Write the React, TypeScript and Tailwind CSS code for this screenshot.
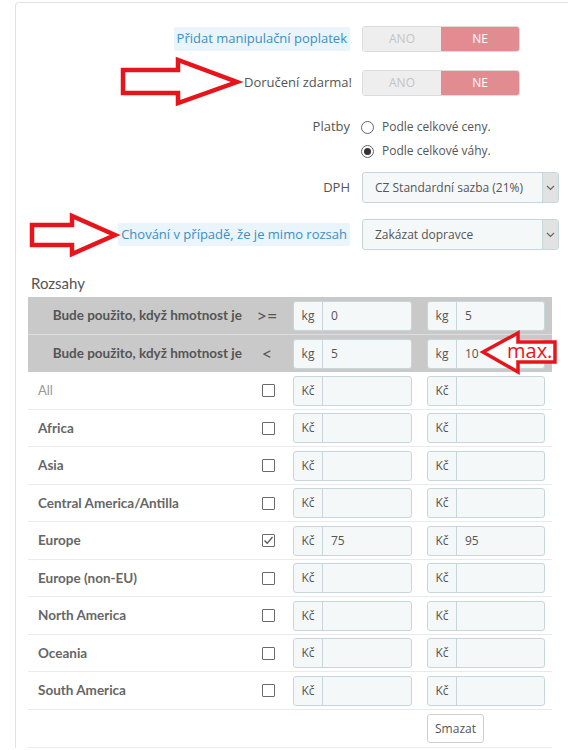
import React from "react";

const zones = [
  { name: "All", bold: false },
  { name: "Africa", bold: true },
  { name: "Asia", bold: true },
  { name: "Central America/Antilla", bold: true },
  { name: "Europe", bold: true, checked: true, a: "75", b: "95" },
  { name: "Europe (non-EU)", bold: true },
  { name: "North America", bold: true },
  { name: "Oceania", bold: true },
  { name: "South America", bold: true },
];

function Toggle() {
  return (
    <div className="flex h-[26px] w-[158px] overflow-hidden rounded-[3px] border border-[#dcdcdc] text-[12px]">
      <div className="flex w-1/2 items-center justify-center bg-[#eeeeee] text-[#c4c4c4]">ANO</div>
      <div className="flex w-1/2 items-center justify-center bg-[#e28c92] text-white">NE</div>
    </div>
  );
}

function Select({ value }: { value: string }) {
  return (
    <div className="flex h-[31px] w-[197px] overflow-hidden rounded-[3px] border border-[#c7d6db] bg-[#f5f8f9]">
      <div className="flex flex-1 items-center pl-[12px] text-[12px] text-[#555]">{value}</div>
      <div className="flex w-[16px] items-center justify-center border-l border-[#c7d6db] bg-[#e2e2e2]">
        <svg width="9" height="6" viewBox="0 0 9 6">
          <polyline points="1,1 4.5,4.5 8,1" fill="none" stroke="#666" strokeWidth="1.2" />
        </svg>
      </div>
    </div>
  );
}

function Radio({ checked }: { checked?: boolean }) {
  return (
    <span className="flex h-[13px] w-[13px] items-center justify-center rounded-full border border-[#666] bg-white">
      {checked && <span className="h-[7px] w-[7px] rounded-full bg-[#333]" />}
    </span>
  );
}

function Checkbox({ checked }: { checked?: boolean }) {
  return (
    <span className="flex h-[13px] w-[13px] items-center justify-center rounded-[1px] border border-[#6a6a6a] bg-white">
      {checked && (
        <svg width="11" height="11" viewBox="0 0 11 11">
          <polyline points="1.5,5.5 4.2,8.3 9.5,2" fill="none" stroke="#555" strokeWidth="1.3" />
        </svg>
      )}
    </span>
  );
}

function AddonInput({ unit, value, width }: { unit: string; value?: string; width: string }) {
  return (
    <div className={`flex h-[30px] ${width} overflow-hidden rounded-[3px] border border-[#c7d6db] bg-[#f5f8f9] text-[12px] text-[#555]`}>
      <div className="flex w-[29px] items-center justify-center border-r border-[#c7d6db]">{unit}</div>
      <div className="flex flex-1 items-center pl-[8px]">{value}</div>
    </div>
  );
}

function BlueLabel({ children }: { children: React.ReactNode }) {
  return (
    <span className="rounded-[2px] bg-[#e9f4fb] px-[3px] py-[2px] text-[#3e8fc4]">{children}</span>
  );
}

export default function App() {
  return (
    <div className="relative h-[750px] w-[568px] overflow-hidden bg-white font-['Open_Sans',sans-serif] text-[13px] text-[#555]">
      <div className="ml-[15px] mt-[2px] w-[600px] rounded-tl-[4px] border-l border-t border-[#e3e3e3] pt-[23px]">
        {/* form */}
        <div className="flex h-[26px] items-center">
          <div className="flex w-[334px] justify-end">
            <BlueLabel>Přidat manipulační poplatek</BlueLabel>
          </div>
          <div className="ml-[12px]">
            <Toggle />
          </div>
        </div>

        <div className="mt-[18px] flex h-[26px] items-center">
          <div className="-mr-[2px] flex w-[336px] justify-end">Doručení zdarma!</div>
          <div className="ml-[12px]">
            <Toggle />
          </div>
        </div>

        <div className="mt-[19px] flex">
          <div className="flex h-[24px] w-[334px] items-center justify-end">Platby</div>
          <div className="ml-[11px] flex flex-col text-[12px]">
            <div className="flex h-[24px] items-center gap-[8px]">
              <Radio />
              <span>Podle celkové ceny.</span>
            </div>
            <div className="flex h-[24px] items-center gap-[8px]">
              <Radio checked />
              <span>Podle celkové váhy.</span>
            </div>
          </div>
        </div>

        <div className="mt-[9px] flex items-center">
          <div className="flex w-[334px] justify-end">DPH</div>
          <div className="ml-[12px]">
            <Select value="CZ Standardní sazba (21%)" />
          </div>
        </div>

        <div className="mt-[16px] flex items-center">
          <div className="flex w-[334px] justify-end">
            <BlueLabel>Chování v případě, že je mimo rozsah</BlueLabel>
          </div>
          <div className="ml-[12px]">
            <Select value="Zakázat dopravce" />
          </div>
        </div>

        {/* ranges */}
        <div className="ml-[12px] w-[524px]">
          <div className="mt-[23px] flex h-[20px] items-center pl-[3px] font-['Lato',sans-serif] text-[15px] text-[#555]">
            Rozsahy
          </div>

          <div className="mt-[4px] bg-[#c9c9c9]">
            <div className="flex h-[37px] items-center">
              <div className="w-[222px] pr-[8px] text-right font-['Lato',sans-serif] text-[13.5px] font-bold text-[#555]">
                Bude použito, když hmotnost je
              </div>
              <div className="w-[36px] pr-[2px] text-center font-['Lato',sans-serif] text-[18px] text-[#555]">&gt;=</div>
              <div className="ml-[7px]">
                <AddonInput unit="kg" value="0" width="w-[119px]" />
              </div>
              <div className="ml-[15px]">
                <AddonInput unit="kg" value="5" width="w-[118px]" />
              </div>
            </div>
            <div className="flex h-[38px] items-center border-t border-[#dedede]">
              <div className="w-[222px] pr-[8px] text-right font-['Lato',sans-serif] text-[13.5px] font-bold text-[#555]">
                Bude použito, když hmotnost je
              </div>
              <div className="w-[36px] pr-[2px] text-center font-['Lato',sans-serif] text-[18px] text-[#555]">&lt;</div>
              <div className="ml-[7px]">
                <AddonInput unit="kg" value="5" width="w-[119px]" />
              </div>
              <div className="ml-[15px]">
                <AddonInput unit="kg" value="10" width="w-[118px]" />
              </div>
            </div>
          </div>

          {zones.map((z, i) => (
            <div
              key={z.name}
              className={`flex items-center border-b border-[#eaeaea] ${i % 2 === 0 ? "h-[38px]" : "h-[37px]"}`}
            >
              <div
                className={`w-[222px] pl-[10px] font-['Lato',sans-serif] ${
                  z.bold ? "text-[13.5px] font-bold text-[#666]" : "text-[13px] text-[#999]"
                }`}
              >
                {z.name}
              </div>
              <div className="flex w-[36px] justify-center">
                <Checkbox checked={z.checked} />
              </div>
              <div className="ml-[7px]">
                <AddonInput unit="Kč" value={z.a} width="w-[119px]" />
              </div>
              <div className="ml-[15px]">
                <AddonInput unit="Kč" value={z.b} width="w-[118px]" />
              </div>
            </div>
          ))}

          <div className="flex h-[38px] items-center border-b border-[#eaeaea]">
            <div className="ml-[399px]">
              <button className="h-[29px] w-[57px] rounded-[3px] border border-[#cfcfcf] bg-white text-[12px] text-[#555]">
                Smazat
              </button>
            </div>
          </div>
        </div>
      </div>

      {/* annotations */}
      <svg className="pointer-events-none absolute left-0 top-0" width="568" height="750">
        <polygon
          points="123,70 178,70 178,60 237,82 178,103 178,93 123,93"
          fill="none"
          stroke="#e8141c"
          strokeWidth="4.5"
        />
        <polygon
          points="32,225 72,225 72,216 115,235 72,254 72,245 32,245"
          fill="none"
          stroke="#e8141c"
          strokeWidth="4.5"
        />
        <polygon
          points="483,352 518,333 518,342 555,342 555,362 518,362 518,372"
          fill="white"
          stroke="#e8141c"
          strokeWidth="3.5"
        />
      </svg>
      <div className="pointer-events-none absolute left-[507px] top-[339px] h-[24px] text-[20px] leading-[24px] text-[#e8141c]">
        max.
      </div>
    </div>
  );
}
